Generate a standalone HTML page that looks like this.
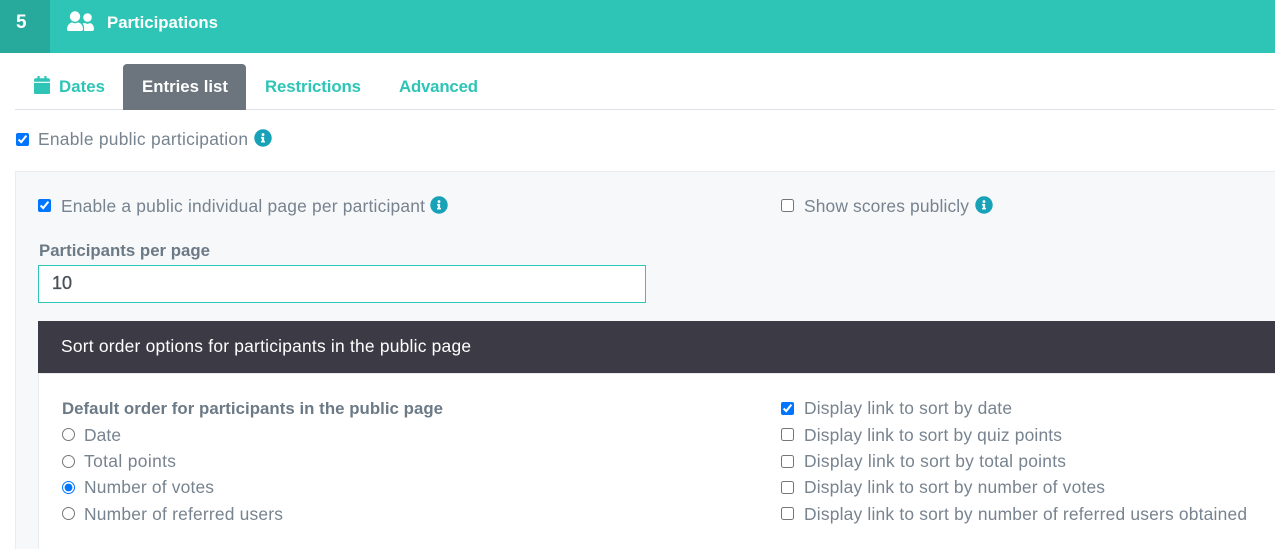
<!DOCTYPE html>
<html lang="en"><head><meta charset="utf-8"><title>Participations</title>
<style>
html,body{margin:0;padding:0;background:#fff}
#p{position:relative;width:1275px;height:549px;overflow:hidden;background:#fff;font-family:"Liberation Sans",sans-serif}
#p div,#p svg,#p input{position:absolute;display:block}
input{margin:0;width:13px;height:13px}
text{font-family:"Liberation Sans",sans-serif;font-size:17.4px;fill:#77838f}
.b{font-weight:700;font-size:16.8px}
</style></head><body><div id="p">
<div style="left:0;top:0;width:1275px;height:53px;background:#2ec5b6"></div>
<div style="left:0;top:0;width:50px;height:53px;background:#27a99c"></div>
<div style="left:15px;top:109px;width:1260px;height:1px;background:#dee2e6"></div>
<div style="left:123px;top:64px;width:123px;height:46px;background:#6c757d;border-radius:4px 4px 0 0"></div>
<div style="left:15px;top:171px;width:1270px;height:400px;background:#f7f8fa;border:1px solid #e9ecef;box-sizing:border-box"></div>
<div style="left:38px;top:265px;width:608px;height:38px;background:#fff;border:1px solid #2ec5b6;box-sizing:border-box"></div>
<div style="left:38px;top:373px;width:1250px;height:190px;background:#fff;border:1px solid #e9ecef;box-sizing:border-box"></div>
<div style="left:38px;top:321px;width:1237px;height:52px;background:#3c3b45"></div>

<svg style="left:60px;top:5px" width="40" height="32" viewBox="0 0 40 32"><g fill="#fff"><circle cx="15" cy="11.500" r="5.200"/><path d="M7 24.500C7 20 10 17.500 12.500 17.500C14 18.500 16 18.500 17.500 17.500C20.500 17.500 23 20 23 24.500C23 25.500 22.300 26 21 26H9C7.700 26 7 25.500 7 24.500Z"/><circle cx="27.500" cy="12.500" r="4.300"/><path d="M24 26C24.500 22 23.800 20 22.500 18.400C24 18 25 18 25.500 18.300C26.800 19 28.200 19 29.500 18.300C32 18 34 20.500 34 24C34 25.300 33.300 26 32 26Z"/></g></svg>
<svg style="left:34px;top:76px" width="16" height="18.3" viewBox="0 0 448 512"><path fill="#2ec5b6" d="M12 192h424c6.600 0 12 5.400 12 12v260c0 26.500-21.500 48-48 48H48c-26.500 0-48-21.500-48-48V204c0-6.600 5.400-12 12-12zm436-44v-36c0-26.500-21.500-48-48-48h-48V12c0-6.600-5.400-12-12-12h-40c-6.600 0-12 5.400-12 12v52H160V12c0-6.600-5.400-12-12-12h-40c-6.600 0-12 5.400-12 12v52H48C21.500 64 0 85.500 0 112v36c0 6.600 5.400 12 12 12h424c6.600 0 12-5.400 12-12z"/></svg>
<svg style="left:254px;top:129px" width="18" height="18" viewBox="0 0 512 512"><path fill="#17a2b8" d="M256 8C119.043 8 8 119.083 8 256c0 136.997 111.043 248 248 248s248-111.003 248-248C504 119.083 392.957 8 256 8zm0 110c23.196 0 42 18.804 42 42s-18.804 42-42 42-42-18.804-42-42 18.804-42 42-42zm56 254c0 6.627-5.373 12-12 12h-88c-6.627 0-12-5.373-12-12v-24c0-6.627 5.373-12 12-12h12v-64h-12c-6.627 0-12-5.373-12-12v-24c0-6.627 5.373-12 12-12h64c6.627 0 12 5.373 12 12v100h12c6.627 0 12 5.373 12 12v24z"/></svg>
<svg style="left:430px;top:196px" width="18" height="18" viewBox="0 0 512 512"><path fill="#17a2b8" d="M256 8C119.043 8 8 119.083 8 256c0 136.997 111.043 248 248 248s248-111.003 248-248C504 119.083 392.957 8 256 8zm0 110c23.196 0 42 18.804 42 42s-18.804 42-42 42-42-18.804-42-42 18.804-42 42-42zm56 254c0 6.627-5.373 12-12 12h-88c-6.627 0-12-5.373-12-12v-24c0-6.627 5.373-12 12-12h12v-64h-12c-6.627 0-12-5.373-12-12v-24c0-6.627 5.373-12 12-12h64c6.627 0 12 5.373 12 12v100h12c6.627 0 12 5.373 12 12v24z"/></svg>
<svg style="left:975px;top:196px" width="18" height="18" viewBox="0 0 512 512"><path fill="#17a2b8" d="M256 8C119.043 8 8 119.083 8 256c0 136.997 111.043 248 248 248s248-111.003 248-248C504 119.083 392.957 8 256 8zm0 110c23.196 0 42 18.804 42 42s-18.804 42-42 42-42-18.804-42-42 18.804-42 42-42zm56 254c0 6.627-5.373 12-12 12h-88c-6.627 0-12-5.373-12-12v-24c0-6.627 5.373-12 12-12h12v-64h-12c-6.627 0-12-5.373-12-12v-24c0-6.627 5.373-12 12-12h64c6.627 0 12 5.373 12 12v100h12c6.627 0 12 5.373 12 12v24z"/></svg>

<input type="checkbox" checked style="left:16px;top:133px">
<input type="checkbox" checked style="left:38px;top:199px">
<input type="checkbox" style="left:781px;top:199px">
<input type="radio" name="o" style="left:62px;top:428px">
<input type="radio" name="o" style="left:62px;top:455px">
<input type="radio" name="o" checked style="left:62px;top:481px">
<input type="radio" name="o" style="left:62px;top:507px">
<input type="checkbox" checked style="left:781px;top:402px">
<input type="checkbox" style="left:781px;top:428px">
<input type="checkbox" style="left:781px;top:455px">
<input type="checkbox" style="left:781px;top:481px">
<input type="checkbox" style="left:781px;top:507px">

<svg style="left:0;top:0;pointer-events:none" width="1275" height="549" viewBox="0 0 1275 549">
<text class="b" x="16" y="28" style="fill:#fff;font-size:19px" textLength="11">5</text>
<text class="b" x="107" y="28" style="fill:#fff" textLength="111">Participations</text>
<text class="b" x="59" y="92" style="fill:#2ec5b6" textLength="46">Dates</text>
<text class="b" x="142" y="92" style="fill:#fff" textLength="86">Entries list</text>
<text class="b" x="265" y="92" style="fill:#2ec5b6" textLength="96">Restrictions</text>
<text class="b" x="399" y="92" style="fill:#2ec5b6" textLength="79">Advanced</text>
<text x="38" y="145" textLength="210">Enable public participation</text>
<text x="61" y="212" textLength="364">Enable a public individual page per participant</text>
<text x="804" y="212" textLength="165">Show scores publicly</text>
<text class="b" x="39" y="256" style="fill:#6c7a86" textLength="171">Participants per page</text>
<text x="52" y="289" style="fill:#495057;font-size:18px;stroke:#495057;stroke-width:.35">10</text>
<text x="61" y="352" style="fill:#fff" textLength="410">Sort order options for participants in the public page</text>
<text class="b" x="62" y="414" style="fill:#6c7a86" textLength="381">Default order for participants in the public page</text>
<text x="84" y="441" textLength="37">Date</text>
<text x="84" y="467" textLength="92">Total points</text>
<text x="84" y="493" textLength="130">Number of votes</text>
<text x="84" y="520" textLength="199">Number of referred users</text>
<text x="804" y="414" textLength="208">Display link to sort by date</text>
<text x="804" y="441" textLength="258">Display link to sort by quiz points</text>
<text x="804" y="467" textLength="262">Display link to sort by total points</text>
<text x="804" y="493" textLength="301">Display link to sort by number of votes</text>
<text x="804" y="520" textLength="443">Display link to sort by number of referred users obtained</text>
</svg>
</div></body></html>
